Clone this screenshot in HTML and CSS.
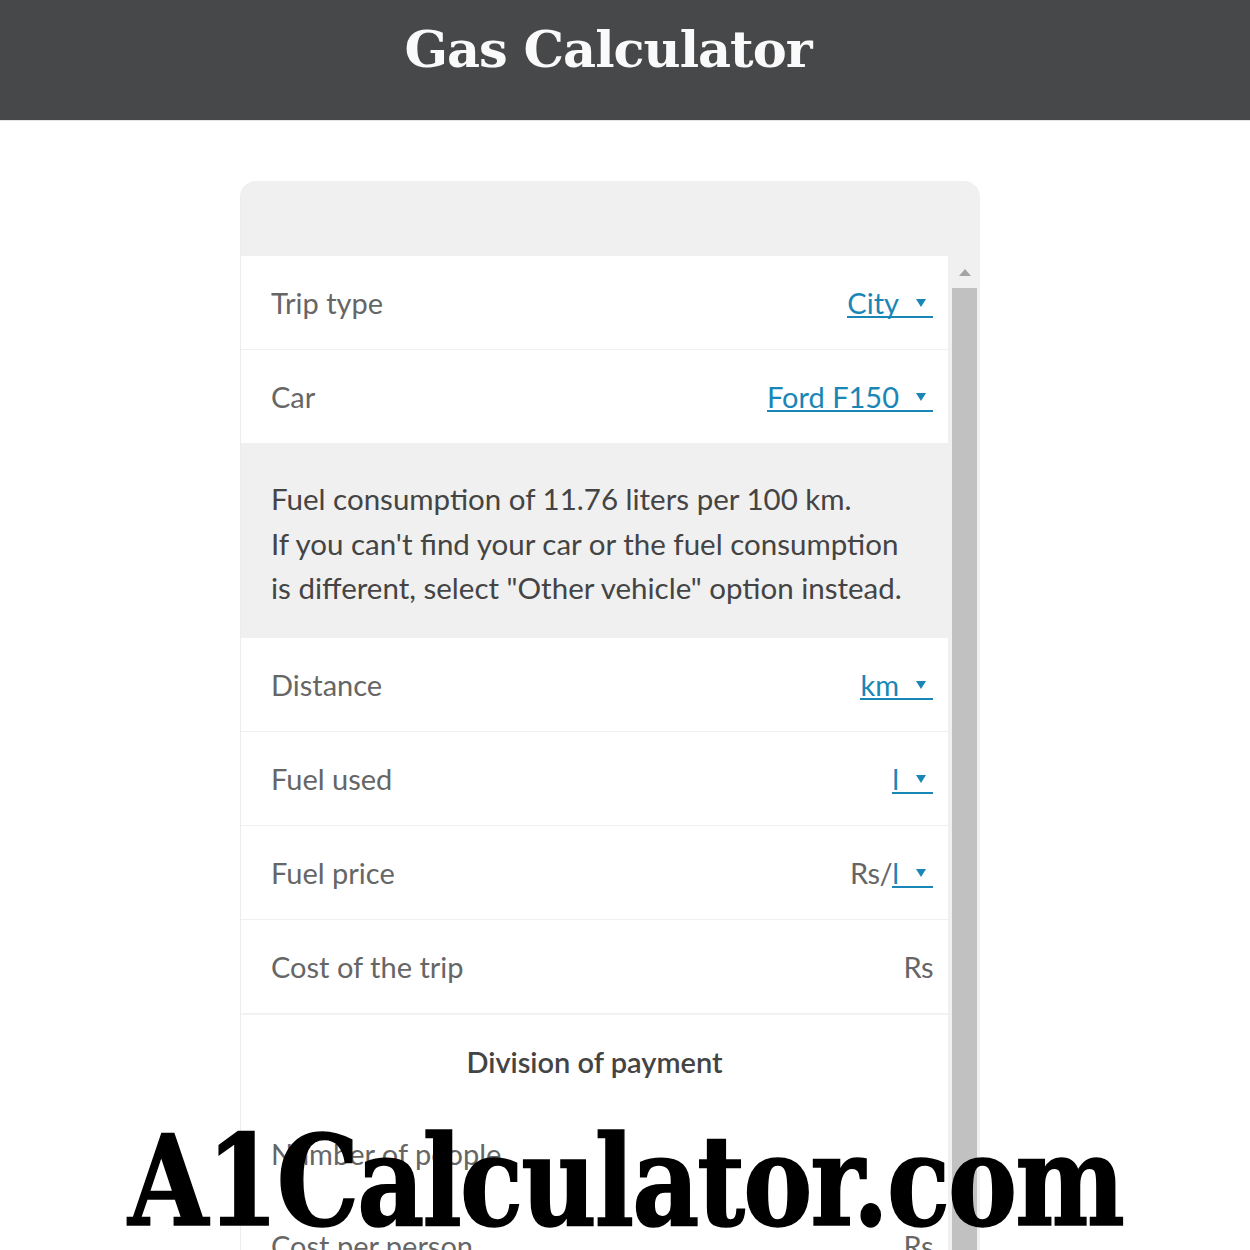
FILE: index.html
```html
<!DOCTYPE html>
<html lang="en">
  <head>
    <meta charset="UTF-8" />
    <link rel="stylesheet" href="styles.css">
    <title>Gas Calculator</title>
  </head>
  <body>

  <header id="topbar">
    <h1>Gas Calculator</h1>
  </header>

  <main id="page">
    <div id="calc">
      <div class="calc_head"></div>
      <div class="calc_body">
        <div id="fields">
          <div class="row">
            <span class="label">Trip type</span>
            <span class="value"><a class="pick">City<i></i></a></span>
          </div>
          <div class="row">
            <span class="label">Car</span>
            <span class="value"><a class="pick">Ford F150<i></i></a></span>
          </div>
          <div class="note">
            Fuel consumption of 11.76 liters per 100 km.<br>
            If you can't find your car or the fuel consumption is different, select "Other vehicle" option instead.
          </div>
          <div class="row">
            <span class="label">Distance</span>
            <span class="value"><a class="pick">km<i></i></a></span>
          </div>
          <div class="row">
            <span class="label">Fuel used</span>
            <span class="value"><a class="pick">l<i></i></a></span>
          </div>
          <div class="row">
            <span class="label">Fuel price</span>
            <span class="value">Rs/<a class="pick">l<i></i></a></span>
          </div>
          <div class="row">
            <span class="label">Cost of the trip</span>
            <span class="value">Rs</span>
          </div>
          <div class="group">
            <h2>Division of payment</h2>
            <div class="row plain">
              <span class="label">Number of people</span>
              <span class="value"></span>
            </div>
          </div>
          <div class="row">
            <span class="label">Cost per person</span>
            <span class="value">Rs</span>
          </div>
        </div>
        <!-- drawn scrollbar: arrow button + thumb -->
        <div class="scrollbar">
          <div class="arrow"></div>
          <div class="thumb"></div>
        </div>
      </div>
    </div>
  </main>

  <div id="brand">A1Calculator.com</div>
</body>
</html>
```

FILE: styles.css
```css
*{
  box-sizing: border-box;
}
html, body {
  margin: 0px;
  padding: 0px;
}
body {
  height: 1250px;
  overflow: hidden;
  position: relative;
  background-color: white;
  font-family: Lato, "Open Sans", sans-serif;
}

/*===============================*/
/* Top bar                       */
/*===============================*/
#topbar {
  height: 121px;
  background-color: #474849;
  border-bottom: 1px solid #e4e4e4;
  display: flex;
  align-items: center;
  justify-content: center;
}
#topbar h1 {
  margin: 0;
  padding-right: 34px;
  padding-bottom: 22px;
  color: #fafafa;
  font-family: "DejaVu Serif", serif;
  font-size: 51px;
  font-weight: bold;
  letter-spacing: -1px;
}

/*===============================*/
/* Calculator card               */
/*===============================*/
#page {
  padding-top: 60px;
  padding-right: 30px;
  display: flex;
  justify-content: center;
}
#calc {
  width: 740px;
  height: 1200px;
  background-color: #f0f0f0;
  border-radius: 16px 16px 0 0;
  border-left: 1px solid #ececec;
  overflow: hidden;
}
.calc_head {
  height: 75px;
}
.calc_body {
  display: flex;
}
#fields {
  width: 707px;
  background-color: white;
}

.row {
  height: 94px;
  display: flex;
  align-items: center;
  justify-content: space-between;
  padding: 0 15px 0 30px;
  border-bottom: 1px solid #f0f0f0;
  font-size: 29px;
}
.row.plain {
  border-bottom: none;
}
.label {
  color: #666;
}
.value {
  color: #666;
  letter-spacing: -0.5px;
}

/* dropdown value: blue text + arrow, one line under both */
.pick {
  display: inline-block;
  color: #1a86b6;
  line-height: 26px;
  border-bottom: 2px solid #1a86b6;
  letter-spacing: 0;
  cursor: pointer;
}
.pick i {
  display: inline-block;
  margin: 0 7px 0 17px;
  border-left: 5px solid transparent;
  border-right: 5px solid transparent;
  border-top: 8px solid #1a86b6;
  vertical-align: 7px;
}

.note {
  background-color: #f0f0f0;
  padding: 33px 31px 27px 30px;
  color: #444;
  font-size: 29.5px;
  line-height: 44.5px;
}

.group {
  border-top: 2px solid #f2f2f2;
  margin-top: -1px;
}
.group h2 {
  margin: 0;
  padding-top: 29px;
  text-align: center;
  color: #444;
  font-size: 29px;
  font-weight: 600;
  line-height: 36px;
}
.group .row {
  height: 119px;
  padding-top: 29px;
}

/*Scrollbar*/
.scrollbar {
  width: 32px;
  padding: 0 3px 0 4px;
}
.scrollbar .arrow {
  height: 32px;
  display: flex;
  align-items: center;
  justify-content: center;
}
.scrollbar .arrow:before {
  content: "";
  border-left: 6px solid transparent;
  border-right: 6px solid transparent;
  border-bottom: 7px solid #a3a3a3;
}
.scrollbar .thumb {
  height: 1000px;
  background-color: #c1c1c1;
}

/*===============================*/
/* Site mark over the page       */
/*===============================*/
#brand {
  position: absolute;
  left: 128px;
  top: 1118px;
  color: black;
  font-family: "DejaVu Serif Condensed", "DejaVu Serif", serif;
  font-stretch: condensed;
  font-size: 126px;
  font-weight: bold;
  letter-spacing: -2px;
  line-height: 1;
  white-space: nowrap;
  -webkit-text-stroke: 1.5px black;
  transform: scaleX(0.913);
  transform-origin: left top;
}
```
